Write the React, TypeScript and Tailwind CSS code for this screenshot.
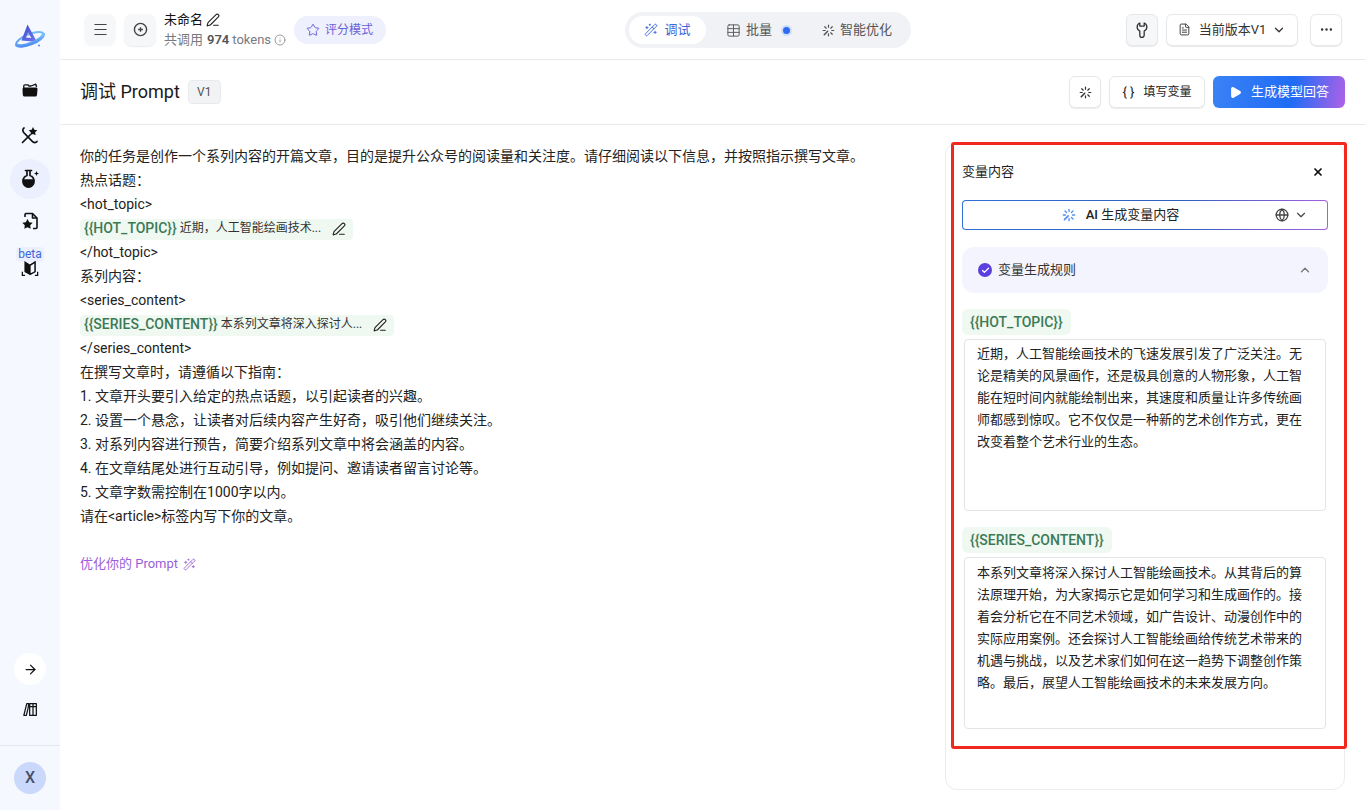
import { useState } from "react";
import {
  ArrowRight,
  Check,
  ChevronDown,
  ChevronUp,
  Ellipsis,
  Globe,
  Info,
  Menu,
  PenLine,
  Play,
  Star,
  Table,
  WandSparkles,
  X,
  FileText,
} from "lucide-react";

const Burst = ({ className = "", stroke = "currentColor" }: { className?: string; stroke?: string }) => (
  <svg viewBox="0 0 16 16" className={className} fill="none" stroke={stroke} strokeWidth="1.500" strokeLinecap="round">
    <path d="M8 1.500v2.500M8 12v2.500M1.500 8H4M12 8h2.500M3.400 3.400l1.800 1.800M12.600 3.400l-1.800 1.800M10.800 10.800l1.800 1.800" />
    <path d="M7 9 2.800 13.200" strokeWidth="1.900" />
  </svg>
);

const Logo = () => (
  <svg viewBox="0 0 32 32" className="w-8 h-8">
    <defs>
      <linearGradient id="tri" x1="0" y1="0" x2="1" y2="1">
        <stop offset="0" stopColor="#3f4cc8" />
        <stop offset="1" stopColor="#7478f0" />
      </linearGradient>
      <linearGradient id="ring" x1="0" y1="1" x2="1" y2="0">
        <stop offset="0" stopColor="#4a86f2" />
        <stop offset="1" stopColor="#7cc8f6" />
      </linearGradient>
    </defs>
    <g transform="rotate(-22 15.800 18)">
      <ellipse cx="15.800" cy="18" rx="14.500" ry="4.800" fill="none" stroke="url(#ring)" strokeWidth="2" />
    </g>
    <path d="M13.500 3.500 23 21 7.500 19.500ZM14.200 11.500 11.800 16.500 17.300 17Z" fill="url(#tri)" fillRule="evenodd" />
    <g transform="rotate(-22 15.800 18)">
      <path d="M1.300 18A14.500 4.800 0 0 0 30.300 18" fill="none" stroke="url(#ring)" strokeWidth="3.600" />
    </g>
    <circle cx="25" cy="24.500" r="0.900" fill="#4a7df0" />
  </svg>
);

const FolderIcon = () => (
  <svg viewBox="0 0 18 18" className="w-[18px] h-[18px]" fill="none">
    <path d="M2.800 7V5c0-.7.500-1.200 1.200-1.200h2.800L8 5h2l4.800-1.800.8 2.800" stroke="#111" strokeWidth="1.300" strokeLinejoin="round" />
    <path d="M1.500 8c0-.8.700-1.500 1.500-1.500h12c.8 0 1.500.7 1.500 1.500l-.5 6c-.1.800-.7 1.500-1.500 1.500H3.500c-.9 0-1.600-.7-1.700-1.500z" fill="#111" />
  </svg>
);

const ToolsIcon = () => (
  <svg viewBox="0 0 20 20" className="w-5 h-5" fill="none" stroke="#111" strokeWidth="1.700" strokeLinecap="round">
    <path d="M2.500 17.500 10 10" />
    <path d="M4 3c-1.500 1-1.500 3-.3 4.500l9 9.300c1.500 1 3.300 1 4.300-.3" />
    <path d="M13 2l1.300 2.700 3 .5-2.200 2.100.5 3-2.600-1.400-2.700 1.400.5-3L8.700 5.200l3-.5z" fill="#111" stroke="none" />
  </svg>
);

const FlaskIcon = () => (
  <svg viewBox="0 0 22 22" className="w-[22px] h-[22px]" fill="none" stroke="#111" strokeWidth="1.700" strokeLinecap="round">
    <path d="M6.500 2.500h6M8 3v4.500c-2.500 1-4 3.200-4 5.700 0 3.500 2.500 6 5.500 6s5.500-2.500 5.500-6c0-2.500-1.500-4.700-4-5.700V3" />
    <path d="M4.500 12h10c.5 4-2 6.500-5 6.500s-5.500-2.500-5-6.500z" fill="#111" />
    <path d="M17.500 3l.7 1.800L20 5.500l-1.800.7-.7 1.800-.7-1.800L15 5.500l1.800-.7z" fill="#111" stroke="none" />
  </svg>
);

const StarFileIcon = () => (
  <svg viewBox="0 0 20 20" className="w-5 h-5" fill="none" stroke="#111" strokeWidth="1.600" strokeLinejoin="round">
    <path d="M5 6V3.500c0-.6.400-1 1-1h6.500L17 7v9.500c0 .6-.4 1-1 1h-3" />
    <path d="M12.500 2.500V7H17" />
    <path d="M7.500 8l1.700 3.200 3.500.6-2.500 2.500.5 3.500-3.200-1.600-3.200 1.600.5-3.500L2.300 11.800l3.500-.6z" fill="#111" stroke="none" />
  </svg>
);

const BookScanIcon = () => (
  <svg viewBox="0 0 20 20" className="w-[18px] h-[18px]" fill="none" stroke="#111" strokeWidth="1.400">
    <path d="M10 6 4.500 2.500v10.500L10 16l5.500-3V2.500z" fill="#111" />
    <path d="M10 6v10M10 6l5.500-3.500V13L10 16" fill="#f5f8ff" stroke="#111" />
    <path d="M1.500 13v4h3M18.500 13v4h-3" />
  </svg>
);

const LibraryIcon = () => (
  <svg viewBox="0 0 18 18" className="w-[15px] h-[15px]" fill="none" stroke="#111" strokeWidth="1.500" strokeLinejoin="round">
    <path d="M8 2h8v14H8zM12 2v14M8 5.500h8" />
    <path d="M4.500 2H7L6 8 4 16H1z" />
  </svg>
);

const WrenchIcon = () => (
  <svg viewBox="0 0 16 20" className="w-[14px] h-[18px]" fill="none" stroke="#333" strokeWidth="1.500" strokeLinejoin="round">
    <path d="M5.500 2v3.500h5V2a5 5 0 0 1 0 9.200V16a2.500 2.500 0 0 1-5 0v-4.800A5 5 0 0 1 5.500 2z" />
  </svg>
);

const Tag = ({ label }: { label: string }) => (
  <span className="inline-block h-[26px] leading-[26px] rounded-md bg-[#eff8f1] px-2 text-sm font-medium text-[#3c7a57]">{label}</span>
);

const VarInline = ({ name, text }: { name: string; text: string }) => (
  <div className="h-6 pt-[3px]">
    <div className="flex w-fit items-center h-[21px] pb-[3px] rounded bg-[#eff8f1] px-1">
      <span className="font-medium text-[#3c7a57] mr-[3px]">{name}</span>
      <span className="text-xs text-[#333]">{text}</span>
      <PenLine className="w-[14px] h-[14px] ml-[11px] mr-[3px] mt-[2px] text-[#222]" strokeWidth={1.900} />
    </div>
  </div>
);

const Sidebar = () => (
  <aside className="w-[60px] h-[810px] shrink-0 bg-[#f5f8ff] flex flex-col items-center">
    <div className="h-[72px] flex items-center pt-[2px]"><Logo /></div>
    <div className="h-9 flex items-center"><FolderIcon /></div>
    <div className="h-9 mt-[9px] flex items-center"><ToolsIcon /></div>
    <div className="w-10 h-10 mt-[6px] rounded-full bg-[#eceffd] flex items-center justify-center"><FlaskIcon /></div>
    <div className="h-9 mt-[4px] flex items-center"><StarFileIcon /></div>
    <div className="mt-[8px] h-[15px] rounded bg-[#eaf0ff] px-[2px] text-xs leading-[15px] text-[#3f66d8]">beta</div>
    <div className="-mt-[2px]"><BookScanIcon /></div>
    <div className="mt-auto w-8 h-8 rounded-full bg-white flex items-center justify-center">
      <ArrowRight className="w-[15px] h-[15px] text-[#111]" strokeWidth={2} />
    </div>
    <div className="mt-[17px] h-[17px]"><LibraryIcon /></div>
    <div className="w-full mt-[26px] border-t border-[#e5e7eb] h-[65px] flex items-center justify-center">
      <div className="w-8 h-8 rounded-full bg-[#c9d8fb] text-[#47506b] flex items-center justify-center text-base font-medium">X</div>
    </div>
  </aside>
);

const TopBar = () => (
  <header className="relative h-[60px] border-b border-[#e9eaec] flex items-center pl-6 pr-6">
    <button className="w-8 h-8 rounded-lg bg-[#f6f7f9] flex items-center justify-center">
      <Menu className="w-[17px] h-[17px] text-[#444]" strokeWidth={1.500} />
    </button>
    <button className="ml-2 w-8 h-8 rounded-lg bg-[#f6f7f9] shadow-[0_1px_1px_rgba(0,0,0,0.08)] flex items-center justify-center">
      <svg viewBox="0 0 16 16" className="w-[15px] h-[15px] text-[#444]" fill="none" stroke="currentColor" strokeWidth="1.500">
        <circle cx="8" cy="8" r="6.500" />
        <path d="M8 5.500v5M5.500 8h5" />
      </svg>
    </button>
    <div className="ml-2 leading-5">
      <div className="flex items-center h-5 text-[13px] text-[#111]">
        未命名
        <PenLine className="w-[14px] h-[14px] ml-[3px] text-[#222]" strokeWidth={1.900} />
      </div>
      <div className="flex items-center h-5 text-[13px] text-[#777b82]">
        共调用<span className="ml-1 mr-[3px] font-semibold text-[#555]">974</span>tokens
        <Info className="w-3 h-3 ml-[3px]" strokeWidth={1.500} />
      </div>
    </div>
    <div className="ml-2 h-7 pl-3 pr-[13px] rounded-full bg-[#eff0fd] flex items-center text-xs text-[#6a62d8]">
      <Star className="w-[14px] h-[14px] mr-[5px]" strokeWidth={1.700} />
      评分模式
    </div>

    <div className="absolute left-[565px] top-[12px] h-9 w-[286px] rounded-full bg-[#f0f2f5] flex items-center pl-[4px] text-[13px] text-[#555]">
      <div className="h-7 w-[77px] rounded-full bg-white flex items-center justify-center text-[#3f66d8]">
        <WandSparkles className="w-[14px] h-[14px] mr-[6px]" strokeWidth={1.600} />
        调试
      </div>
      <div className="flex items-center ml-[20px]">
        <Table className="w-[15px] h-[15px] mr-[5px]" strokeWidth={1.500} />
        批量
        <span className="ml-[9px] w-[11px] h-[11px] rounded-full bg-[#2f6bf0] border-2 border-[#cfdcfb]" />
      </div>
      <div className="flex items-center ml-[30px]">
        <Burst className="w-[13px] h-[13px] mr-[5px]" />
        智能优化
      </div>
    </div>

    <div className="ml-auto flex items-center">
      <button className="w-8 h-8 rounded-md border border-[#e5e7eb] bg-[#f6f7f9] shadow-[0_1px_1px_rgba(0,0,0,0.08)] flex items-center justify-center"><WrenchIcon /></button>
      <button className="ml-2 h-8 w-[132px] rounded-md border border-[#e5e7eb] bg-white shadow-[0_1px_1px_rgba(0,0,0,0.08)] flex items-center justify-center text-[13px] text-[#333]">
        <FileText className="w-[13px] h-[13px] mr-[8px]" strokeWidth={1.700} />
        当前版本V1
        <ChevronDown className="w-[14px] h-[14px] ml-[6px]" strokeWidth={2.200} />
      </button>
      <button className="ml-[12px] w-8 h-8 rounded-md border border-[#e5e7eb] bg-white shadow-[0_1px_1px_rgba(0,0,0,0.08)] flex items-center justify-center">
        <Ellipsis className="w-[15px] h-[15px] text-[#333]" />
      </button>
    </div>
  </header>
);

const SubBar = () => (
  <div className="h-[65px] border-b border-[#e9eaec] flex items-center pl-5 pr-[21px]">
    <h1 className="text-lg font-normal text-[#1a1a1a]">调试 Prompt</h1>
    <span className="ml-2 h-6 w-[33px] rounded bg-[#f2f3f5] border border-[#e9eaec] text-xs text-[#555] flex items-center justify-center">V1</span>
    <div className="ml-auto flex items-center">
      <button className="w-8 h-8 rounded-md border border-[#e5e7eb] bg-white shadow-[0_1px_1px_rgba(0,0,0,0.08)] flex items-center justify-center">
        <Burst className="w-[13px] h-[13px] text-[#333]" />
      </button>
      <button className="ml-2 w-[96px] h-8 rounded-md border border-[#e5e7eb] bg-white shadow-[0_1px_1px_rgba(0,0,0,0.08)] flex items-center justify-center text-xs text-[#222]">
        <span className="mr-[9px] text-[13px]">{"{ }"}</span>
        填写变量
      </button>
      <button className="ml-2 w-[132px] h-8 rounded-md bg-[linear-gradient(100deg,#3b82f6_0%,#1f6cf5_60%,#b061e8_100%)] flex items-center justify-center text-[13px] text-white">
        <Play className="w-[13px] h-[13px] mr-[9px] fill-white" />
        生成模型回答
      </button>
    </div>
  </div>
);

const promptTop = ["你的任务是创作一个系列内容的开篇文章，目的是提升公众号的阅读量和关注度。请仔细阅读以下信息，并按照指示撰写文章。", "热点话题：", "<hot_topic>"];
const promptBottom = [
  "</series_content>",
  "在撰写文章时，请遵循以下指南：",
  "1. 文章开头要引入给定的热点话题，以引起读者的兴趣。",
  "2. 设置一个悬念，让读者对后续内容产生好奇，吸引他们继续关注。",
  "3. 对系列内容进行预告，简要介绍系列文章中将会涵盖的内容。",
  "4. 在文章结尾处进行互动引导，例如提问、邀请读者留言讨论等。",
  "5. 文章字数需控制在1000字以内。",
  "请在<article>标签内写下你的文章。",
];

const VarPanel = () => {
  const [hot, setHot] = useState(
    "近期，人工智能绘画技术的飞速发展引发了广泛关注。无论是精美的风景画作，还是极具创意的人物形象，人工智能在短时间内就能绘制出来，其速度和质量让许多传统画师都感到惊叹。它不仅仅是一种新的艺术创作方式，更在改变着整个艺术行业的生态。"
  );
  const [series, setSeries] = useState(
    "本系列文章将深入探讨人工智能绘画技术。从其背后的算法原理开始，为大家揭示它是如何学习和生成画作的。接着会分析它在不同艺术领域，如广告设计、动漫创作中的实际应用案例。还会探讨人工智能绘画给传统艺术带来的机遇与挑战，以及艺术家们如何在这一趋势下调整创作策略。最后，展望人工智能绘画技术的未来发展方向。"
  );

  return (
    <div className="relative w-[400px] mt-[18px] mb-[20px] ml-auto mr-[21px] rounded-xl border border-[#ebecee] px-4 pt-[18px]">
      {/* red annotation box over the panel */}
      <div className="absolute left-[5px] -top-[2px] w-[396px] h-[607px] rounded-[3px] border-[3px] border-[#f0281e] pointer-events-none" />
      <div className="flex items-center justify-between h-5">
        <span className="text-[13px] text-[#222]">变量内容</span>
        <X className="w-3 h-3 mr-[4px] text-[#111]" strokeWidth={3.500} />
      </div>
      <div className="mt-[18px] h-[30px] rounded bg-[linear-gradient(90deg,#2f6fd6,#2f5fc0_60%,#a55fe0)] p-px">
        <div className="h-full rounded-[3px] bg-white flex items-center text-[13px] text-[#222]">
          <div className="flex-1 flex items-center justify-center pl-[3px]">
            <Burst className="w-[14px] h-[14px] mr-[10px]" stroke="#4f8ef0" />
            <span className="font-medium">AI</span>&nbsp;生成变量内容
          </div>
          <div className="w-[52px] flex items-center text-[#444]">
            <Globe className="w-[14px] h-[14px]" strokeWidth={2.200} />
            <ChevronDown className="w-[14px] h-[14px] ml-[5px]" strokeWidth={2} />
          </div>
        </div>
      </div>
      <div className="mt-[17px] h-[46px] rounded-xl bg-[#f4f4fe] flex items-center pl-4 pr-[16px] text-[13px] text-[#333]">
        <span className="w-[14px] h-[14px] rounded-full bg-[#5d3fe0] flex items-center justify-center mr-[6px]">
          <Check className="w-[9px] h-[9px] text-white" strokeWidth={3.500} />
        </span>
        变量生成规则
        <ChevronUp className="ml-auto w-[14px] h-[14px] text-[#777]" strokeWidth={2.200} />
      </div>
      <div className="mt-4 h-[26px] flex"><Tag label="{{HOT_TOPIC}}" /></div>
      <textarea
        value={hot}
        onChange={(e) => setHot(e.target.value)}
        className="block mt-1 ml-[2px] w-[362px] h-[172px] resize-none rounded border border-[#e2e4e8] pl-[12px] pr-[16px] pt-[3px] text-[13px] leading-[22px] text-[#222] outline-none"
      />
      <div className="mt-4 h-[26px] flex"><Tag label="{{SERIES_CONTENT}}" /></div>
      <textarea
        value={series}
        onChange={(e) => setSeries(e.target.value)}
        className="block mt-1 ml-[2px] w-[362px] h-[172px] resize-none rounded border border-[#e2e4e8] pl-[12px] pr-[16px] pt-[4px] text-[13px] leading-[22px] text-[#222] outline-none"
      />
    </div>
  );
};

export default function App() {
  return (
    <div className="flex w-[1366px] h-[810px] overflow-hidden bg-white text-[#222] font-['Roboto','Noto_Sans_CJK_SC',sans-serif]">
      <Sidebar />
      <div className="flex-1 flex flex-col min-w-0">
        <TopBar />
        <SubBar />
        <div className="flex flex-1 min-h-0">
          <div className="pl-5 pt-[19px] w-[860px] shrink-0 text-sm leading-6 text-[#222]">
            {promptTop.map((l) => <div key={l}>{l}</div>)}
            <VarInline name="{{HOT_TOPIC}}" text="近期，人工智能绘画技术..." />
            <div>{"</hot_topic>"}</div>
            <div>系列内容：</div>
            <div>{"<series_content>"}</div>
            <VarInline name="{{SERIES_CONTENT}}" text="本系列文章将深入探讨人..." />
            {promptBottom.map((l) => <div key={l}>{l}</div>)}
            <div className="mt-[24px] flex items-center text-[13px] text-[#9a5fd8]">
              优化你的 Prompt
              <WandSparkles className="w-[13px] h-[13px] ml-[5px]" strokeWidth={1.600} />
            </div>
          </div>
          <VarPanel />
        </div>
      </div>
    </div>
  );
}
